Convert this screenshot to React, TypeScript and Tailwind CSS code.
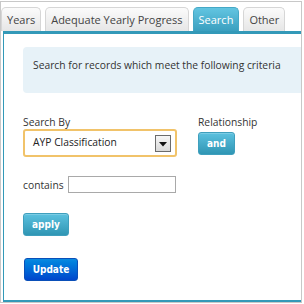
import React from "react";

const tabBase =
  "h-[24px] px-[5px] pt-[3px] border border-b-0 rounded-t-[5px] text-[11px] leading-[18px] whitespace-nowrap";
const tabIdle = `${tabBase} border-[#d6d6d6] bg-gradient-to-b from-[#fbfbfb] to-[#e6e6e6] text-[#444]`;
const tabActive = `${tabBase} border-[#45a8c6] bg-gradient-to-b from-[#62c5e1] to-[#3a9fbf] text-white`;

const btnInfo =
  "h-[23px] rounded-[3px] border border-[#3f9fbd] bg-gradient-to-b from-[#5bc1df] to-[#2f96b4] text-white font-bold text-[10px] leading-[21px] text-center [font-family:'DejaVu_Sans_Condensed','Liberation_Sans',sans-serif] shadow-[inset_0_1px_0_rgba(255,255,255,0.2)]";

export default function App() {
  return (
    <div className="w-[304px] h-[304px] bg-white overflow-hidden pt-px [font-family:'Open_Sans',sans-serif]">
      <div className="w-[302px] h-[302px] border border-[#c8c8c8] flex flex-col overflow-hidden">
        {/* tabs */}
        <div className="flex items-end gap-[4px] pt-[5px] h-[29px] shrink-0">
          <div className={tabIdle}>Years</div>
          <div className={tabIdle}>Adequate Yearly Progress</div>
          <div className={tabActive}>Search</div>
          <div className={tabIdle}>Other</div>
        </div>
        {/* panel */}
        <div className="flex-1 ml-[2px] border-t-[3px] border-l border-b-2 border-[#3399b8] overflow-hidden pl-[19px]">
          <div className="mt-[13px] w-[300px] h-[46px] bg-[#e7f2f8] rounded-[4px] pl-[10px] pt-[11px] text-[10.3px] leading-[14px] text-[#333]">
            Search for records which meet the following criteria
          </div>

          <div className="mt-[22px] flex gap-[21px]">
            <div className="flex flex-col">
              <div className="text-[10.3px] leading-[14px] text-[#333]">Search By</div>
              <div className="w-[154px] h-[28px] border-2 border-[#f1c36a] rounded-[3px] flex items-center justify-between pl-[8px] pr-[4px]">
                <span className="text-[10.3px] text-[#222]">AYP Classification</span>
                <div className="w-[16px] h-[17px] border border-[#6b6b6b] bg-gradient-to-b from-[#f6f6f6] to-[#d9d9d9] flex items-center justify-center">
                  <svg width="8" height="5" viewBox="0 0 8 5" className="mt-[2px]">
                    <path d="M0 0 H8 L4 4.5 Z" fill="#111" />
                  </svg>
                </div>
              </div>
            </div>
            <div className="flex flex-col">
              <div className="text-[10.3px] leading-[14px] text-[#333]">Relationship</div>
              <div className={`${btnInfo} w-[37px] mt-[3px]`}>and</div>
            </div>
          </div>

          <div className="mt-[19px] flex items-center gap-[4px]">
            <span className="text-[10.3px] leading-[14px] text-[#333]">contains</span>
            <div className="w-[108px] h-[17px] border border-[#a9a9a9] bg-white" />
          </div>

          <div className={`${btnInfo} w-[46px] mt-[20px]`}>apply</div>

          <div className="mt-[22px] ml-px w-[54px] h-[23px] rounded-[3px] border border-[#0a4fb8] bg-gradient-to-b from-[#0a8ae0] to-[#0045cc] text-white font-bold text-[10px] leading-[21px] text-center [font-family:'DejaVu_Sans_Condensed','Liberation_Sans',sans-serif]">
            Update
          </div>
        </div>
      </div>
    </div>
  );
}
